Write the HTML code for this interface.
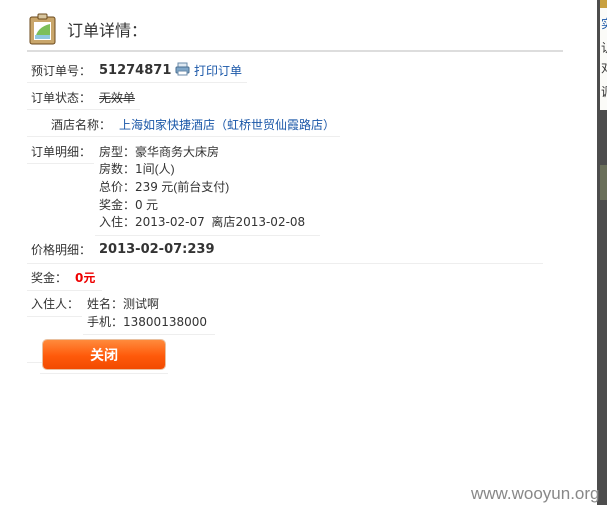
<!DOCTYPE html>
<html><head><meta charset="utf-8"><style>
body{margin:0;width:607px;height:505px;background:#fff;position:relative;overflow:hidden;font-family:"Liberation Sans","Noto Sans CJK SC",sans-serif;font-size:12px;color:#333}
.a{position:absolute;white-space:nowrap;line-height:16px}
.ln{position:absolute;height:1px;background:#eee}
.blue{color:#1a57a8}
.num{font-family:"DejaVu Sans",sans-serif;font-size:12px}
</style></head><body>
<div style="position:absolute;left:597px;top:0;width:10px;height:505px;background:#4d4d4d"></div>
<div style="position:absolute;left:600px;top:0;width:7px;height:110px;background:#fbfbf8"></div>
<div style="position:absolute;left:600px;top:0;width:7px;height:8px;background:#c8a040"></div>
<div class="a" style="left:601px;top:16px;font-size:12px;color:#1a57a8">实</div>
<div class="a" style="left:601px;top:40px;font-size:12px">认</div>
<div class="a" style="left:601px;top:60px;font-size:12px">对</div>
<div class="a" style="left:601px;top:84px;font-size:12px">调</div>
<div style="position:absolute;left:600px;top:165px;width:7px;height:35px;background:#6a6f5a"></div>

<svg style="position:absolute;left:29px;top:13px" width="28" height="32" viewBox="0 0 28 32">
<rect x="1" y="4" width="25" height="27" rx="2" fill="#c9a66b" stroke="#6b4a1c"/>
<rect x="9" y="1" width="9" height="5" rx="1" fill="#d8c6a0" stroke="#6b4a1c"/>
<rect x="5" y="9" width="17" height="18" fill="#fff"/>
<path d="M6 26 Q8 14 21 11 L21 26Z" fill="#7cbf5a"/>
<path d="M6 22 L21 22 L21 26 L6 26Z" fill="#8fc8e0"/>
</svg>
<div class="a" style="left:67px;top:22px;font-size:16px;line-height:20px;color:#333">订单详情：</div>
<div style="position:absolute;left:27px;top:50px;width:536px;height:2px;background:#ddd"></div>

<div class="a" style="left:31px;top:63px">预订单号：</div>
<div class="a num" style="left:99px;top:63px;font-weight:bold;font-size:13px;color:#333">51274871</div>
<svg style="position:absolute;left:175px;top:62px" width="15" height="14"><rect x="3" y="1" width="9" height="5" fill="#dfe9f2" stroke="#6a8aa8"/><rect x="1" y="5" width="13" height="6" rx="1" fill="#7fa6c8" stroke="#4a6f92"/><rect x="3" y="9" width="9" height="4" fill="#fff" stroke="#6a8aa8"/></svg>
<div class="a blue" style="left:194px;top:63px">打印订单</div>
<div class="ln" style="left:27px;top:82px;width:220px"></div>

<div class="a" style="left:31px;top:90px">订单状态：</div>
<div class="a" style="left:99px;top:90px;text-decoration:line-through">无效单</div>
<div class="ln" style="left:27px;top:109px;width:113px"></div>

<div class="a" style="left:51px;top:117px">酒店名称：</div>
<div class="a blue" style="left:119px;top:117px">上海如家快捷酒店（虹桥世贸仙霞路店）</div>
<div class="ln" style="left:27px;top:136px;width:313px"></div>

<div class="a" style="left:31px;top:144px">订单明细：</div>
<div class="ln" style="left:27px;top:163px;width:67px"></div>
<div class="a" style="left:99px;top:144px">房型：豪华商务大床房</div>
<div class="a" style="left:99px;top:161px">房数：<span class="num">1</span>间(人)</div>
<div class="a" style="left:99px;top:179px">总价：<span class="num">239</span> 元(前台支付)</div>
<div class="a" style="left:99px;top:197px">奖金：<span class="num">0</span> 元</div>
<div class="a" style="left:99px;top:214px">入住：<span class="num">2013-02-07</span> &nbsp;离店<span class="num">2013-02-08</span></div>
<div class="ln" style="left:95px;top:235px;width:225px"></div>

<div class="a" style="left:31px;top:242px">价格明细：</div>
<div class="a num" style="left:99px;top:242px;font-weight:bold;font-size:13px">2013-02-07:239</div>
<div class="ln" style="left:27px;top:263px;width:516px"></div>

<div class="a" style="left:31px;top:270px">奖金：</div>
<div class="a" style="left:75px;top:270px;color:#e00;font-weight:bold"><span class="num" style="font-weight:bold">0</span>元</div>
<div class="ln" style="left:27px;top:290px;width:75px"></div>

<div class="a" style="left:31px;top:296px">入住人：</div>
<div class="ln" style="left:27px;top:316px;width:55px"></div>
<div class="a" style="left:87px;top:296px">姓名：测试啊</div>
<div class="a" style="left:87px;top:314px">手机：<span class="num">13800138000</span></div>
<div class="ln" style="left:83px;top:334px;width:132px"></div>

<div style="position:absolute;left:43px;top:340px;width:122px;height:29px;border-radius:4px;background:linear-gradient(#ff8a3c,#ff5a0a 55%,#f24a00);box-shadow:0 0 0 1px #e8c0a0"></div>
<div class="a" style="left:43px;top:346px;width:122px;text-align:center;color:#fff;font-weight:bold;font-size:14px;line-height:18px">关闭</div>
<div class="ln" style="left:27px;top:362px;width:15px"></div>
<div class="ln" style="left:40px;top:373px;width:128px"></div>

<div class="a" style="left:471px;top:484px;font-size:17px;color:#888;line-height:20px">www.wooyun.org</div>
</body></html>
